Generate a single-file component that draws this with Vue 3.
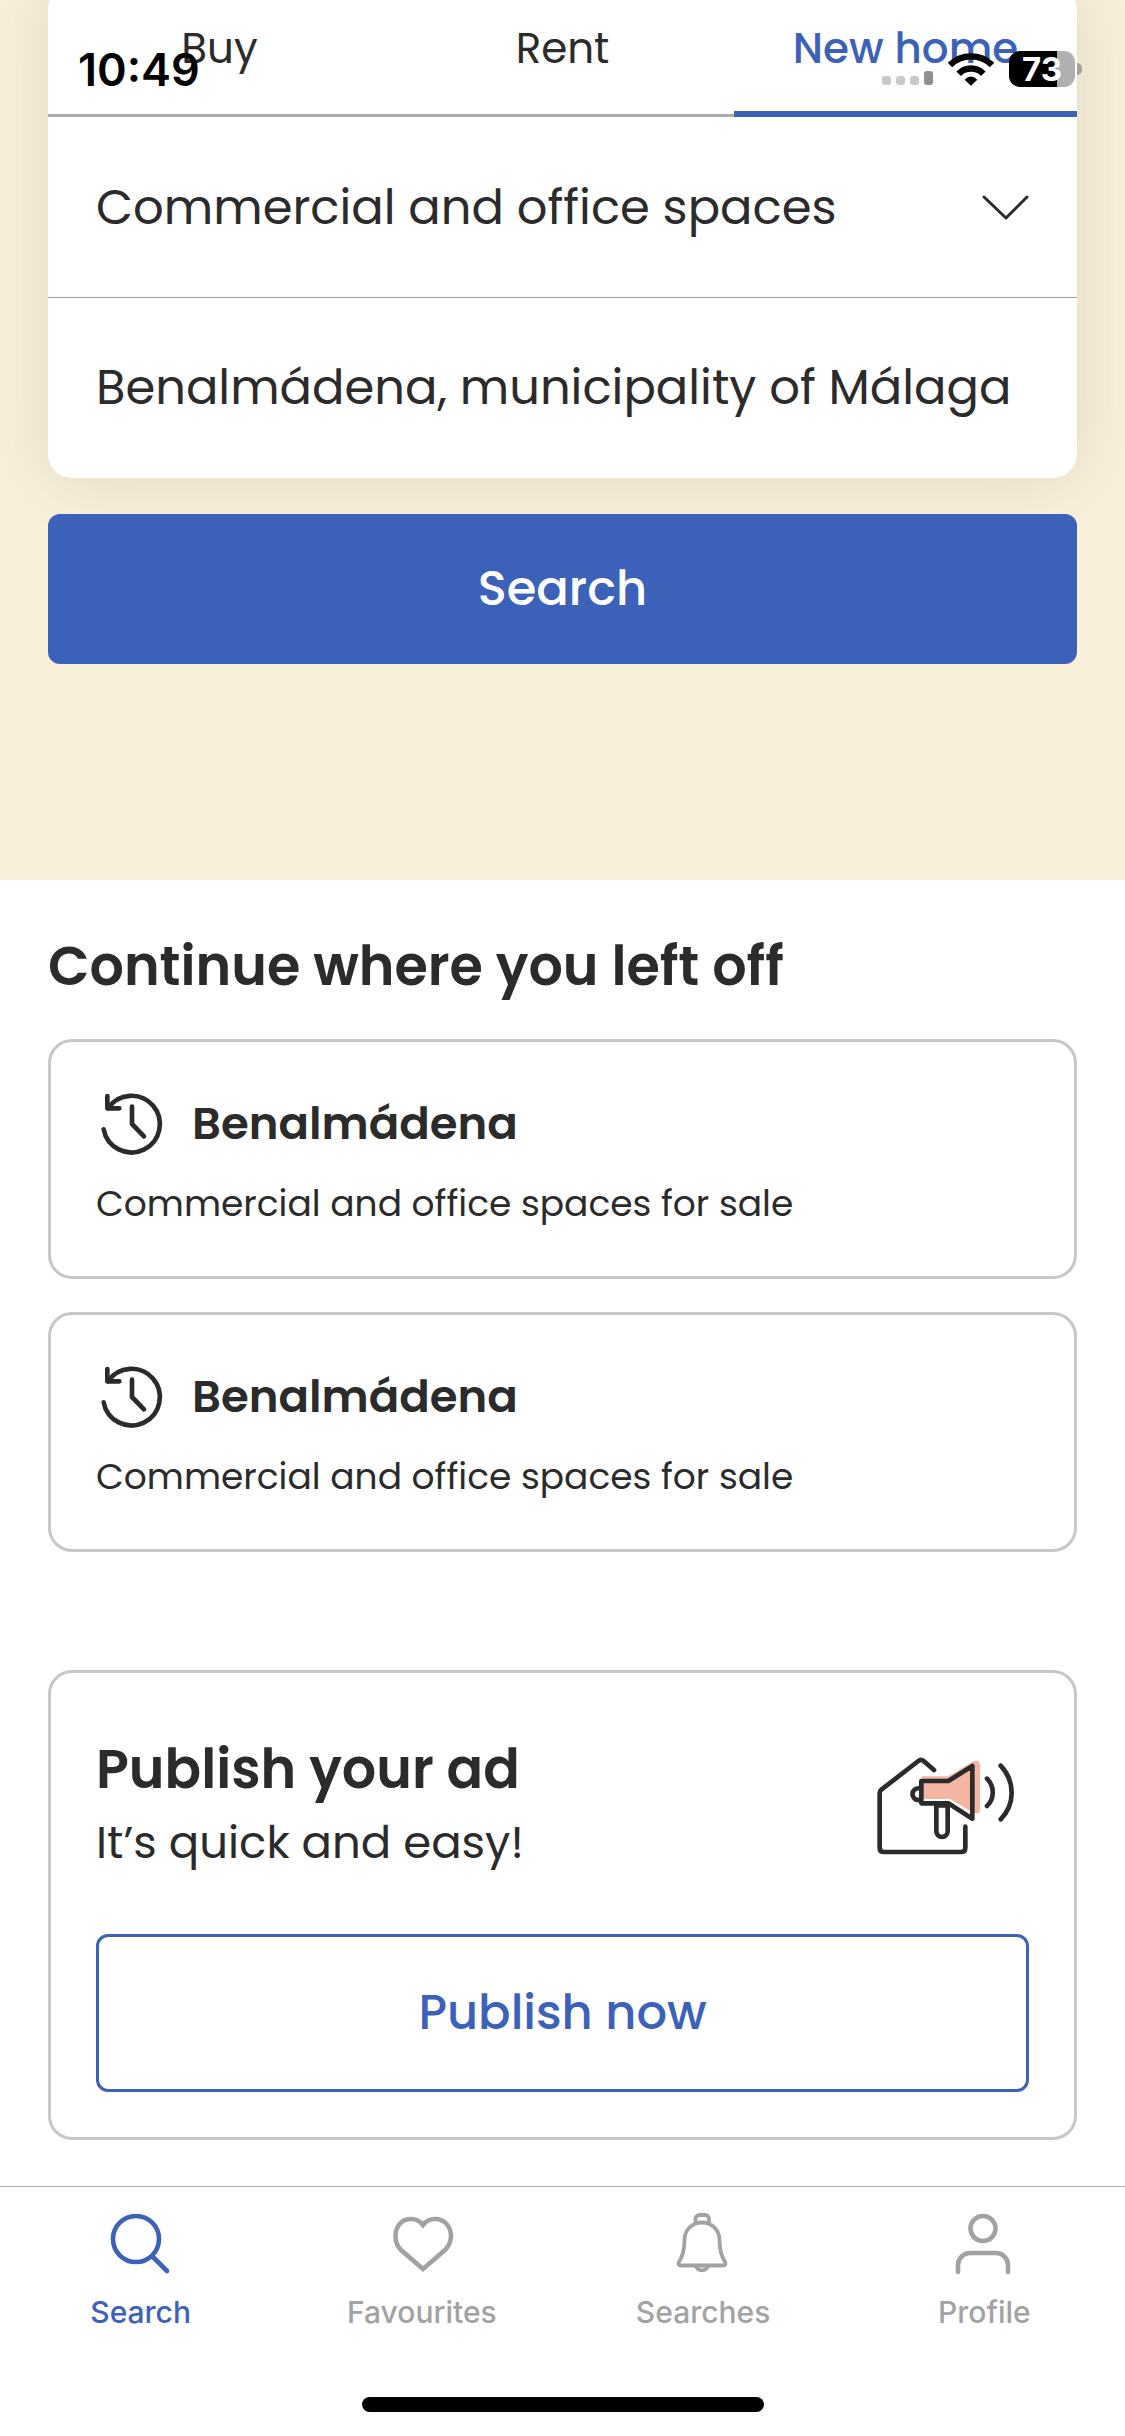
<script setup>
import { ref } from 'vue'

const tabs = ['Buy', 'Rent', 'New home']
const activeTab = ref('New home')
const propertyType = ref('Commercial and office spaces')
const place = ref('Benalmádena, municipality of Málaga')

const recent = [
  { id: 1, title: 'Benalmádena', detail: 'Commercial and office spaces for sale' },
  { id: 2, title: 'Benalmádena', detail: 'Commercial and office spaces for sale' },
]

const navItems = [
  {
    label: 'Search',
    width: 4.6,
    paths: ['M54 31a23 23 0 1 1-46 0a23 23 0 1 1 46 0Z', 'M47 48L62 63'],
  },
  {
    label: 'Favourites',
    width: 4.6,
    paths: [
      'M37 61L15 42C11 38 9.5 33 9.5 28C9.5 18 16 11 25 11C30 11 34 13 37 17C40 13 44 11 49 11C58 11 65 18 65 28C65 33 63 38 59 42Z',
    ],
  },
  {
    label: 'Searches',
    width: 3.8,
    paths: [
      'M35 14.5C25 14.5 17.5 22 17.5 32C17.5 43 14.5 50 12 54C11 56 12 57.5 14 57.5H56C58 57.5 59 56 58 54C55.5 50 52.5 43 52.5 32C52.5 22 45 14.5 35 14.5Z',
      'M28.5 15V11a4 4 0 0 1 4-4H38a4 4 0 0 1 4 4V15',
      'M29 58a6.3 6.3 0 0 0 12 0',
    ],
  },
  {
    label: 'Profile',
    width: 4.6,
    paths: [
      'M47.5 20.5a12.5 12.5 0 1 1-25 0a12.5 12.5 0 1 1 25 0Z',
      'M10 64V57a12 12 0 0 1 12-12H48a12 12 0 0 1 12 12V64',
    ],
  },
]
const activeNav = ref('Search')
</script>

<template>
  <div class="page">
    <div class="status">
      <span class="time">10:49</span>
      <div class="status-icons">
        <div class="signal"><i></i><i></i><i></i><i class="tall"></i></div>
        <svg class="wifi" viewBox="264 93 138 102" aria-hidden="true">
          <path d="M270 132A90 90 0 0 1 396 132" fill="none" stroke="#000" stroke-width="19" />
          <path d="M296 158A52 52 0 0 1 370 158" fill="none" stroke="#000" stroke-width="19" />
          <path d="M333 194L314 176Q333 157 352 176Z" />
        </svg>
        <div class="battery">
          <span class="level">73</span>
          <i class="tip"></i>
        </div>
      </div>
    </div>

    <form class="hero" @submit.prevent>
      <div class="search-card">
        <div class="tabs" role="tablist">
          <button
            v-for="tab in tabs"
            :key="tab"
            type="button"
            role="tab"
            class="tab"
            :class="{ active: tab === activeTab }"
            :aria-selected="tab === activeTab"
            @click="activeTab = tab"
          >
            {{ tab }}
          </button>
        </div>
        <div class="field">
          <select v-model="propertyType" aria-label="Property type">
            <option>Commercial and office spaces</option>
          </select>
          <svg class="chevron" viewBox="0 0 48 28" aria-hidden="true">
            <path d="M3 4L25 25L46 4" />
          </svg>
        </div>
        <div class="field">
          <input v-model="place" type="text" aria-label="Location" />
        </div>
      </div>
      <button type="submit" class="primary">Search</button>
    </form>

    <main class="content">
      <h2>Continue where you left off</h2>
      <div class="recent">
        <a v-for="item in recent" :key="item.id" href="#" class="card">
          <span class="card-head">
            <svg class="history" viewBox="0 0 216 216" aria-hidden="true">
              <path d="M23 124A85 85 0 1 0 36 61" />
              <path d="M34 24V61H70" />
              <path d="M108 56V108L144 145" />
            </svg>
            <strong>{{ item.title }}</strong>
          </span>
          <span class="card-detail">{{ item.detail }}</span>
        </a>
      </div>

      <section class="publish">
        <div class="publish-head">
          <div class="publish-text">
            <h2>Publish your ad</h2>
            <p>It’s quick and easy!</p>
          </div>
          <svg class="megaphone" viewBox="63 69 504 360" aria-hidden="true">
            <path
              class="tint"
              d="M245 160H325L398 116Q420 108 420 126V262Q420 271 410 271H402L330 228H245Z"
            />
            <path d="M282 141L251 114Q243 107 235 114L124 200Q119 204 119 210V374Q119 387 132 387H363Q376 387 376 374V311" />
            <path d="M244 174H325L397 129V287L325 241H244Z" />
            <path d="M289 247V325A17 17 0 0 0 323 325V247Z" />
            <path d="M240 196C210 192 210 234 240 231" />
            <path d="M441 167C464 190 464 228 441 249" />
            <path d="M482 128C526 175 526 243 482 289" />
          </svg>
        </div>
        <button type="button" class="outline">Publish now</button>
      </section>
    </main>

    <nav class="bottom">
      <div class="nav-items">
        <a
          v-for="item in navItems"
          :key="item.label"
          href="#"
          class="nav-item"
          :class="{ active: item.label === activeNav }"
          @click.prevent="activeNav = item.label"
        >
          <svg viewBox="0 0 72 72" :stroke-width="item.width" aria-hidden="true">
            <path v-for="d in item.paths" :key="d" :d="d" />
          </svg>
          <span>{{ item.label }}</span>
        </a>
      </div>
      <div class="home-bar"></div>
    </nav>
  </div>
</template>

<style>
body {
  margin: 0;
  background: #fff;
}
</style>

<style scoped>
.page {
  position: relative;
  display: flex;
  flex-direction: column;
  min-height: 100vh;
  overflow: hidden;
  background: #fff;
  color: #2b2b2b;
  font-family: Poppins, Inter, sans-serif;
}
.page *,
.page {
  box-sizing: border-box;
}
button,
input,
select {
  margin: 0;
  padding: 0;
  border: 0;
  background: none;
  color: inherit;
  font: inherit;
}
h2,
p {
  margin: 0;
}
a {
  color: inherit;
  text-decoration: none;
}

.status {
  position: absolute;
  z-index: 2;
  top: 0;
  left: 0;
  right: 0;
  display: flex;
  align-items: center;
  justify-content: space-between;
  height: 138px;
  padding: 0 50px 0 78px;
  color: #000;
  font-family: Inter, sans-serif;
  font-weight: 600;
  pointer-events: none;
}
.time {
  font-size: 45px;
}
.status-icons {
  display: flex;
  align-items: center;
  gap: 15px;
}
.signal {
  display: flex;
  align-items: flex-end;
  gap: 5px;
  height: 32px;
}
.signal i {
  width: 9px;
  height: 9px;
  border-radius: 3px;
  background: #c9c9c9;
}
.signal .tall {
  height: 14px;
  background: #8f8f8f;
}
.wifi {
  width: 46px;
  height: 34px;
}
.battery {
  position: relative;
  width: 66px;
  height: 36px;
  border-radius: 11px;
  background: linear-gradient(to right, #000 73%, #b0b0b0 73%);
  color: #fff;
  text-align: center;
}
.level {
  display: block;
  font-size: 33px;
  font-weight: 700;
  line-height: 36px;
}
.tip {
  position: absolute;
  top: 12px;
  left: 68px;
  width: 5px;
  height: 12px;
  border-radius: 0 6px 6px 0;
  background: #a9a292;
}

.hero {
  display: flex;
  flex-direction: column;
  gap: 36px;
  margin-top: -15px;
  padding: 0 48px 216px;
  background: #f8f0db;
}
.search-card {
  border-radius: 24px;
  background: #fff;
  box-shadow: 0 0 64px rgba(100, 80, 60, 0.14);
}
.tabs {
  display: flex;
  height: 132px;
  box-shadow: inset 0 -3px #ababab;
}
.tab {
  flex: 1;
  border-bottom: 6px solid transparent;
  font-size: 42px;
}
.tab.active {
  border-color: #3c61b9;
  color: #3c61b9;
  font-weight: 500;
}
.field {
  display: flex;
  align-items: center;
  height: 180px;
  padding: 0 48px;
  font-size: 48px;
}
.field + .field {
  height: 181px;
  border-top: 1px solid #9c9c9c;
}
.field select,
.field input {
  flex: 1;
  min-width: 0;
  height: 100%;
  appearance: none;
  outline: none;
}
.chevron {
  width: 48px;
  height: 28px;
  fill: none;
  stroke: #2b2b2b;
  stroke-width: 3;
  stroke-linecap: round;
  pointer-events: none;
}
.primary {
  height: 150px;
  border-radius: 12px;
  background: #3c61b9;
  color: #fff;
  font-size: 48px;
  font-weight: 500;
}

.content {
  padding: 56px 48px 46px;
}
h2 {
  font-size: 54px;
  font-weight: 600;
  line-height: 60px;
}
.recent {
  display: flex;
  flex-direction: column;
  gap: 33px;
  margin-top: 43px;
}
.card,
.publish {
  border: 3px solid #c7c7c7;
  border-radius: 24px;
}
.card {
  display: flex;
  flex-direction: column;
  gap: 20px;
  padding: 46px 45px 48px;
}
.card-head {
  display: flex;
  align-items: center;
  gap: 24px;
}
.card-head strong {
  font-size: 45px;
  font-weight: 600;
}
.history {
  width: 72px;
  height: 72px;
  fill: none;
  stroke: #2b2b2b;
  stroke-width: 14;
  stroke-linecap: round;
  stroke-linejoin: round;
}
.card-detail {
  font-size: 36px;
  line-height: 48px;
}
.publish {
  margin-top: 118px;
  padding: 66px 45px 45px;
}
.publish-head {
  display: flex;
  align-items: center;
  justify-content: space-between;
  margin-bottom: 61px;
}
.publish-text p {
  margin-top: 14px;
  font-size: 45px;
  line-height: 60px;
}
.megaphone {
  width: 168px;
  height: 120px;
  fill: none;
  stroke: #2b2b2b;
  stroke-width: 14;
  stroke-linecap: round;
  stroke-linejoin: round;
}
.megaphone .tint {
  fill: #f4b5a3;
  stroke: none;
}
.outline {
  display: block;
  width: 100%;
  height: 158px;
  border: 3px solid #3c61b9;
  border-radius: 12px;
  color: #3c61b9;
  font-size: 48px;
  font-weight: 500;
}

.bottom {
  display: flex;
  flex-direction: column;
  margin-top: auto;
  padding: 21px 0 24px;
  border-top: 1px solid #b0b0b0;
  font-family: Inter, sans-serif;
}
.nav-items {
  display: flex;
}
.nav-item {
  display: flex;
  flex: 1;
  flex-direction: column;
  align-items: center;
  gap: 14px;
  color: #a2a2a2;
  font-size: 30px;
  font-weight: 500;
  line-height: 36px;
}
.nav-item.active {
  color: #3c61b9;
}
.nav-item svg {
  width: 72px;
  height: 72px;
  fill: none;
  stroke: currentColor;
  stroke-linecap: round;
}
.home-bar {
  align-self: center;
  width: 402px;
  height: 15px;
  margin-top: 67px;
  border-radius: 8px;
  background: #000;
}
</style>
